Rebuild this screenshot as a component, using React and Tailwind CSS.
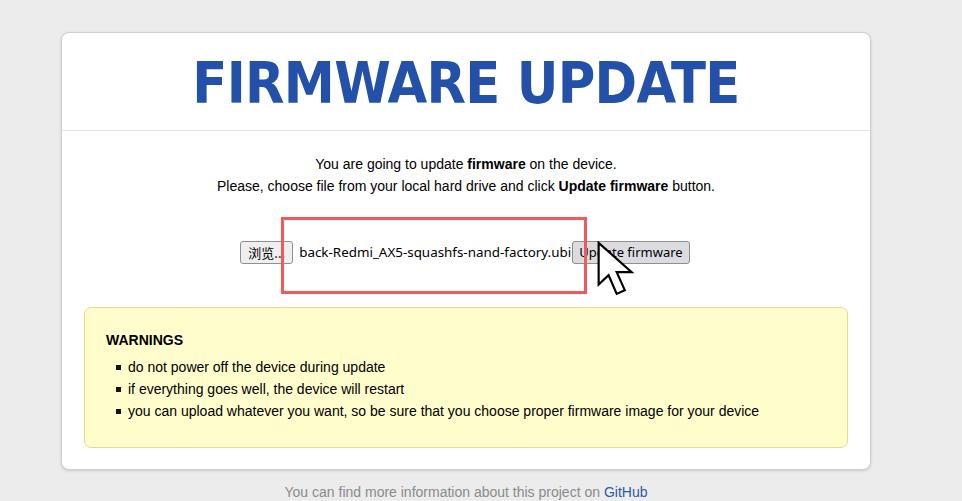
export default function App() {
  const warnings = [
    'do not power off the device during update',
    'if everything goes well, the device will restart',
    'you can upload whatever you want, so be sure that you choose proper firmware image for your device',
  ];

  return (
    <div className="min-h-[501px] bg-[#ececec] pt-[32px] font-['Liberation_Sans',Arial,sans-serif] text-[14px] text-black">
      <div className="ml-[61px] w-[810px] bg-white border border-[#cfcfcf] rounded-[8px] shadow-[0_1px_3px_rgba(0,0,0,0.15)]">
        <header className="h-[98px] flex items-center justify-center border-b border-[#e3e3e3]">
          <h1 className="pt-[4px] font-['DejaVu_Sans',sans-serif] font-bold text-[57px] leading-none text-[#2350a8] tracking-[-0.7px] [font-stretch:condensed]">
            FIRMWARE UPDATE
          </h1>
        </header>

        <div className="px-[22px] pt-[22px] pb-[21px]">
          <div className="text-center leading-[22px]">
            <p>You are going to update <b>firmware</b> on the device.</p>
            <p>Please, choose file from your local hard drive and click <b>Update firmware</b> button.</p>
          </div>

          <form className="relative mt-[44px] mb-[43px] flex items-center justify-center" onSubmit={(e) => e.preventDefault()}>
            <div className="flex items-center pr-[2px] font-['Noto_Sans','Noto_Sans_CJK_SC',sans-serif] text-[13px]">
              <button type="button" className="h-[23px] px-[7px] bg-[#efefef] border border-[#8f8f8f] rounded-[3px] leading-none font-['Noto_Sans_CJK_SC',sans-serif]">
                浏览...
              </button>
              <span className="ml-[6px] whitespace-nowrap text-[13.4px]">back-Redmi_AX5-squashfs-nand-factory.ubi</span>
              <button type="submit" className="ml-[1px] h-[23px] px-[6px] bg-[#dcdce0] border border-[#8f8f8f] rounded-[3px] leading-none">
                Update firmware
              </button>
            </div>

            <div className="absolute left-[197px] top-[-24px] w-[306px] h-[77px] border-[3px] border-[#f05a5a] pointer-events-none" />
            <svg className="absolute left-[512px] top-[0px]" width="42" height="56" viewBox="0 0 13 18" fill="none">
              <path d="M0.6 0.6 L0.6 14 L3.8 11 L6.4 17 L9 15.8 L6.4 10 L11.2 10 Z" fill="white" stroke="black" strokeWidth="0.7" strokeLinejoin="miter" />
            </svg>
          </form>

          <div className="bg-[#fffdcc] border border-[#ecd98e] rounded-[7px] px-[21px] pt-[22px] pb-[25px]">
            <h3 className="font-bold leading-[20px] mb-[6px]">WARNINGS</h3>
            <ul className="leading-[22px]">
              {warnings.map((w) => (
                <li key={w} className="flex items-center">
                  <span className="ml-[10px] mr-[7px] w-[5px] h-[5px] bg-[#111]" />
                  {w}
                </li>
              ))}
            </ul>
          </div>
        </div>
      </div>

      <p className="mt-[12px] text-center text-[#8a8a8a] pr-[30px]">
        You can find more information about this project on <a className="text-[#2a5aa8]" href="#">GitHub</a>
      </p>
    </div>
  );
}
